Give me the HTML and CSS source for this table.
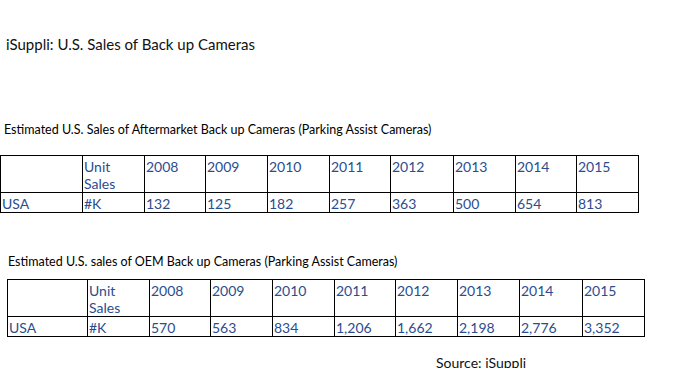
FILE: index.html
```html
<!DOCTYPE html>
<html>
<head>
<meta charset="utf-8">
<link rel="stylesheet" href="styles.css">
</head>
<body>
<div class="page">
  <h1 class="title">iSuppli: U.S. Sales of Back up Cameras</h1>
  <p class="caption cap1">Estimated U.S. Sales of Aftermarket Back up Cameras (Parking Assist Cameras)</p>
  <table class="data t1">
    <colgroup>
      <col style="width:82px"><col style="width:62px"><col style="width:61px"><col style="width:62px"><col style="width:62px"><col style="width:61px"><col style="width:63px"><col style="width:62px"><col style="width:61px"><col style="width:62px">
    </colgroup>
    <tr class="head"><td></td><td>Unit<br>Sales</td><td>2008</td><td>2009</td><td>2010</td><td>2011</td><td>2012</td><td>2013</td><td>2014</td><td>2015</td></tr>
    <tr class="row"><td>USA</td><td>#K</td><td>132</td><td>125</td><td>182</td><td>257</td><td>363</td><td>500</td><td>654</td><td>813</td></tr>
  </table>
  <p class="caption cap2">Estimated U.S. sales of OEM Back up Cameras (Parking Assist Cameras)</p>
  <table class="data t2">
    <colgroup>
      <col style="width:80px"><col style="width:62px"><col style="width:61px"><col style="width:62px"><col style="width:62px"><col style="width:61px"><col style="width:62px"><col style="width:62px"><col style="width:63px"><col style="width:62px">
    </colgroup>
    <tr class="head"><td></td><td>Unit<br>Sales</td><td>2008</td><td>2009</td><td>2010</td><td>2011</td><td>2012</td><td>2013</td><td>2014</td><td>2015</td></tr>
    <tr class="row"><td>USA</td><td>#K</td><td>570</td><td>563</td><td>834</td><td>1,206</td><td>1,662</td><td>2,198</td><td>2,776</td><td>3,352</td></tr>
  </table>
  <p class="source">Source: iSuppli</p>
</div>
</body>
</html>
```
FILE: styles.css
```css
html, body {
  margin: 0;
  padding: 0;
  background: #ffffff;
}
.page {
  font-family: Lato, "Open Sans", sans-serif;
  color: #111111;
  width: 682px;
  height: 368px;
  overflow: hidden;
}
.title {
  margin: 0;
  padding: 35px 0 0 6px;
  font-size: 15px;
  font-weight: normal;
  line-height: 18px;
}
.caption {
  margin: 0;
  font-size: 12.5px;
  line-height: 14px;
  color: #000000;
}
.cap1 {
  padding: 70px 0 0 4px;
}
.cap2 {
  padding: 42px 0 0 8px;
}
.data {
  border-collapse: collapse;
  table-layout: fixed;
  color: #2a4d8f;
  font-size: 14px;
}
.data td {
  border: 1px solid #000000;
  padding: 2px 0 0 1px;
  vertical-align: top;
  line-height: 17px;
  white-space: nowrap;
}
.t1 {
  margin: 18px 0 0 0;
  width: 639px;
}
.t2 {
  margin: 10px 0 0 7px;
  width: 638px;
}
.head td {
  height: 34px;
}
.row td {
  height: 16px;
}
.t2 .head td {
  height: 33px;
}
.source {
  margin: 0;
  padding: 17px 0 0 436px;
  font-size: 14px;
  line-height: 18px;
}
```
